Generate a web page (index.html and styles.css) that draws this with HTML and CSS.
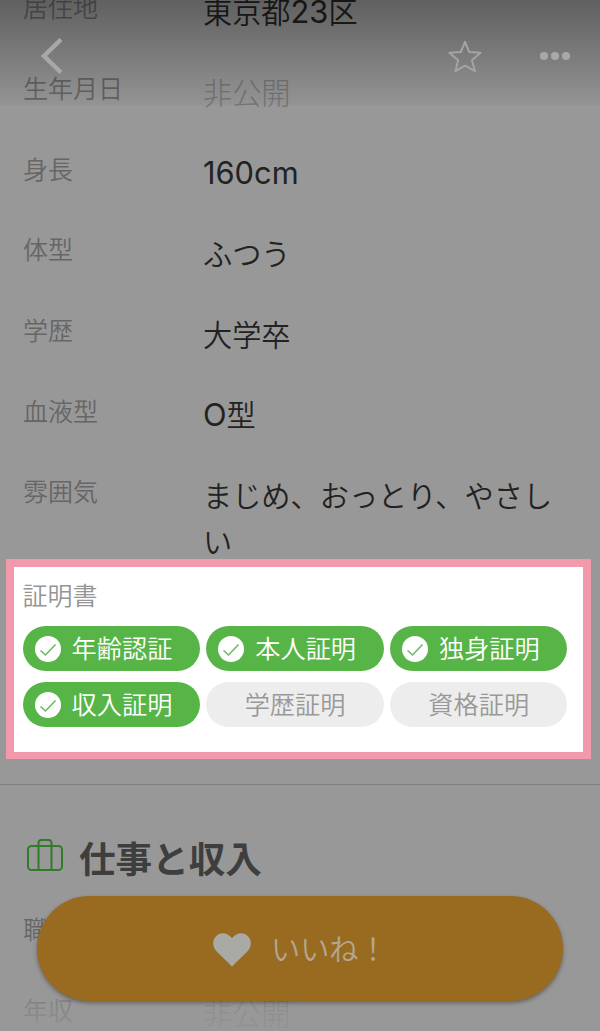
FILE: index.html
```
<!DOCTYPE html>
<html lang="ja">
<head>
  <meta charset="UTF-8" />
  <meta name="viewport" content="width=device-width, initial-scale=1" />
  <title>プロフィール</title>
  <link rel="stylesheet" href="styles.css">
</head>
<body>
  <svg class="symbols">
    <symbol id="check" viewBox="0 0 26 26">
      <circle cx="13" cy="13" r="13" fill="#fff" />
      <path d="M5.5 14.5 L10.5 19 L20.5 8.5" fill="none" stroke="#6fb864" stroke-width="1.6" />
    </symbol>
  </svg>

  <header class="topbar">
    <svg class="back" viewBox="0 0 24 38">
      <path d="M21 2.5 L4 19 L21 35.5" />
    </svg>
    <svg class="star" viewBox="0 0 36 36">
      <path d="M18 2.8 L22.2 13 L33.6 13.8 L24.9 21.2 L28 32.2 L18 26.7 L8.4 32.2 L11.1 21.2 L2.4 13.8 L13.8 13 Z" />
    </svg>
    <svg class="more" viewBox="0 0 32 10">
      <circle cx="5" cy="5" r="4.1" />
      <circle cx="16" cy="5" r="4.1" />
      <circle cx="27" cy="5" r="4.1" />
    </svg>
  </header>

  <main>
    <dl class="profile">
      <div class="row"><dt>居住地</dt><dd>東京都<span class="latin">23</span>区</dd></div>
      <div class="row"><dt>生年月日</dt><dd class="private">非公開</dd></div>
      <div class="row"><dt>身長</dt><dd><span class="latin">160cm</span></dd></div>
      <div class="row"><dt>体型</dt><dd>ふつう</dd></div>
      <div class="row"><dt>学歴</dt><dd>大学卒</dd></div>
      <div class="row"><dt>血液型</dt><dd><span class="latin">O</span>型</dd></div>
      <div class="row last"><dt>雰囲気</dt><dd>まじめ、おっとり、やさしい</dd></div>
    </dl>

    <section class="certs">
      <h3>証明書</h3>
      <div class="chips">
        <span class="chip on"><svg><use href="#check" /></svg>年齢認証</span>
        <span class="chip on"><svg><use href="#check" /></svg>本人証明</span>
        <span class="chip on"><svg><use href="#check" /></svg>独身証明</span>
        <span class="chip on"><svg><use href="#check" /></svg>収入証明</span>
        <span class="chip">学歴証明</span>
        <span class="chip">資格証明</span>
      </div>
    </section>

    <section class="work">
      <h2>
        <svg viewBox="0 0 36 32">
          <rect x="1" y="7" width="34" height="24" rx="3.5" />
          <path d="M11.5 31 V4 Q11.5 1 14.5 1 H21.5 Q24.5 1 24.5 4 V31" />
        </svg>
        仕事と収入
      </h2>
      <dl class="profile">
        <div class="row"><dt>職</dt><dd></dd></div>
        <div class="row"><dt>年収</dt><dd class="private">非公開</dd></div>
      </dl>
    </section>
  </main>

  <div class="fade"></div>
  <button class="like">
    <svg viewBox="0 0 38 34">
      <path d="M19 33.5 L3.2 18 C-1 13.5 -.6 6.5 3.3 2.9 C7.5 -.9 14.5 -.8 19 5.3 C23.5 -.8 30.5 -.9 34.7 2.9 C38.6 6.5 39 13.5 34.8 18 Z" />
    </svg>
    <span>いいね！</span>
  </button>
</body>
</html>
```
FILE: styles.css
```
* {
  box-sizing: border-box;
}

body {
  margin: 0;
  position: relative;
  height: 1031px;
  overflow: hidden;
  background-color: #989898;
  font-family: Inter, "Noto Sans CJK JP", sans-serif;
  font-weight: 350;
  color: #222;
}

.symbols {
  position: absolute;
  width: 0;
  height: 0;
}

/* top bar floats over the scrolling profile */
.topbar {
  position: absolute;
  z-index: 1;
  top: 0;
  left: 0;
  width: 100%;
  height: 105px;
  padding: 16px 29px 0 40px;
  display: flex;
  align-items: center;
  background: linear-gradient(rgba(0, 0, 0, 0.37), rgba(0, 0, 0, 0.03));
}

.back {
  width: 24px;
  height: 38px;
  margin-right: auto;
  margin-top: -9px;
  fill: none;
  stroke: #a8a8a8;
  stroke-width: 4.5;
}

.star {
  width: 36px;
  height: 36px;
  margin-top: -8px;
  margin-right: 56px;
  fill: none;
  stroke: #a4a4a4;
  stroke-width: 2;
  stroke-linejoin: round;
}

.more {
  width: 32px;
  height: 10px;
  margin-top: -9px;
  fill: #a8a8a8;
}

main {
  display: flow-root;
}

.profile {
  margin: -12.7px 0 0;
  padding-left: 23px;
}

.row {
  display: grid;
  grid-template-columns: 180px 365px;
  height: 80.7px;
}

.row.last {
  height: 87.5px;
}

dt {
  padding-top: 1px;
  font-size: 25px;
  line-height: 40px;
  color: #666;
}

dd {
  margin: 2.5px 0 0;
  font-size: 29.2px;
  line-height: 46px;
}

.latin {
  font-size: 30.8px;
  line-height: 1;
  font-weight: 400;
}

.private {
  color: #777;
  font-weight: 300;
}

/* highlighted certificates */
.certs {
  width: 585px;
  height: 200px;
  margin-left: 6px;
  padding: 8px 8px 0 8.6px;
  border: 8px solid #f29aac;
  border-bottom-width: 7px;
  background-color: #fff;
}

.certs h3 {
  margin: 0;
  padding-top: 1px;
  font-size: 25px;
  line-height: 40px;
  font-weight: 350;
  color: #959595;
}

.chips {
  display: grid;
  grid-template-columns: repeat(3, 177.5px);
  gap: 11px 6.2px;
  margin-top: 10px;
}

.chip {
  display: flex;
  align-items: center;
  justify-content: center;
  height: 45px;
  padding-top: 2px;
  border-radius: 23px;
  font-size: 25.2px;
  line-height: 43px;
  color: #999;
  background-color: #ededed;
}

.chip.on {
  justify-content: flex-start;
  padding-left: 12px;
  color: #fff;
  background-color: #57b548;
}

.chip svg {
  width: 26px;
  height: 26px;
  margin-right: 11px;
}

.work {
  margin-top: 25px;
  border-top: 1px solid #808080;
}

.work h2 {
  display: flex;
  align-items: center;
  gap: 16px;
  height: 54px;
  margin: 46px 0 0 27px;
  font-size: 36.6px;
  font-weight: 700;
  color: #3e3e3e;
}

.work h2 svg {
  width: 36px;
  height: 32px;
  margin-top: -6px;
  fill: none;
  stroke: #317b2b;
  stroke-width: 2;
}

.work .profile {
  margin-top: 24px;
}

.fade {
  position: absolute;
  left: 0;
  bottom: 0;
  width: 100%;
  height: 100px;
  background: linear-gradient(rgba(152, 152, 152, 0), rgba(152, 152, 152, 0.85));
}

.like {
  position: absolute;
  left: 37px;
  top: 896px;
  width: 526px;
  height: 105px;
  padding: 0 0 0 176px;
  display: flex;
  align-items: center;
  gap: 20px;
  border: 0;
  border-radius: 53px;
  background-color: #986b20;
  box-shadow: 0 2px 4px rgba(0, 0, 0, 0.35);
  font-family: inherit;
  font-size: 29.2px;
  font-weight: 350;
  color: #b3a792;
}

.like svg {
  width: 38px;
  height: 34px;
  margin-top: 2px;
  fill: #a9a9a6;
}

.like span {
  margin-top: -3px;
}
```
